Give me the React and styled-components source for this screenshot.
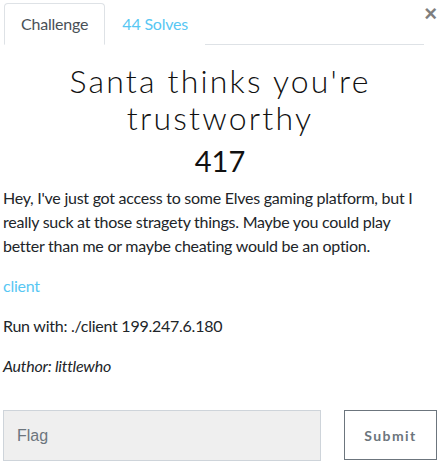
import styled, { createGlobalStyle } from 'styled-components';

const GlobalStyle = createGlobalStyle`
  body {
    margin: 0;
    background: #fff;
    font-family: Lato, "Open Sans", sans-serif;
    color: #212529;
  }
  * { box-sizing: border-box; }
`;

const Modal = styled.div`
  width: 440px;
  padding: 3px 3px 0 3px;
`;

const Header = styled.div`
  display: flex;
  align-items: flex-start;
`;

const Tabs = styled.ul`
  display: flex;
  flex: 1;
  list-style: none;
  margin: 0 0 0 1px;
  padding: 0;
  border-bottom: 1px solid #dee2e6;
  max-width: 420px;
`;

const Tab = styled.li`
  margin-bottom: -1px;
  padding: 8px 16px;
  font-size: 16px;
  line-height: 24px;
  letter-spacing: -0.2px;
  border: 1px solid ${p => (p.$active ? '#dee2e6' : 'transparent')};
  border-bottom-color: ${p => (p.$active ? '#fff' : 'transparent')};
  border-radius: 4px 4px 0 0;
  background: #fff;
  color: ${p => (p.$active ? '#495057' : '#58c7f3')};
`;

const Close = styled.button`
  margin: 0 0 0 auto;
  padding: 0;
  border: 0;
  background: none;
  font-family: "Liberation Sans", Arial, sans-serif;
  font-size: 22px;
  font-weight: 700;
  line-height: 1;
  color: #000;
  opacity: 0.5;
`;

const Title = styled.h3`
  margin: 17px 0 0;
  text-align: center;
  font-family: Lato, sans-serif;
  font-weight: 300;
  font-size: 32px;
  line-height: 37px;
  letter-spacing: 2.2px;
  color: #111;
`;

const Value = styled.h4`
  margin: 8px 0 8px;
  text-align: center;
  font-weight: 400;
  font-size: 29px;
  line-height: 34px;
  color: #111;
`;

const Para = styled.p`
  max-width: 422px;
  margin: 0 0 16px;
  font-size: 16px;
  line-height: 24px;
  letter-spacing: -0.25px;
  font-style: ${p => (p.$italic ? 'italic' : 'normal')};
`;

const Link = styled.a`
  color: #58c7f3;
  text-decoration: none;
`;

const Form = styled.form`
  display: flex;
  align-items: flex-start;
  margin-top: 32px;
`;

const FlagInput = styled.input`
  width: 318px;
  height: 51px;
  padding: 0 13px;
  border: 1px solid #ced4da;
  border-radius: 0;
  background: #efefef;
  font-family: "Liberation Sans", Arial, sans-serif;
  font-size: 16px;
  color: #495057;
  &::placeholder { color: #6c757d; }
`;

const Submit = styled.button`
  margin-left: 23px;
  width: 93px;
  height: 50px;
  padding: 0;
  border: 1px solid #6c757d;
  border-radius: 0;
  background: #fff;
  font-family: Lato, sans-serif;
  font-size: 14px;
  font-weight: 700;
  letter-spacing: 1.4px;
  color: #6c757d;
`;

export default function App() {
  return (
    <>
      <GlobalStyle />
      <Modal>
        <Header>
          <Tabs>
            <Tab $active>Challenge</Tab>
            <Tab>44 Solves</Tab>
          </Tabs>
          <Close aria-label="Close">×</Close>
        </Header>

        <Title>Santa thinks you're trustworthy</Title>
        <Value>417</Value>

        <Para>
          Hey, I've just got access to some Elves gaming platform, but I really suck at those
          stragety things. Maybe you could play better than me or maybe cheating would be an option.
        </Para>
        <Para><Link href="#">client</Link></Para>
        <Para>Run with: ./client 199.247.6.180</Para>
        <Para $italic>Author: littlewho</Para>

        <Form onSubmit={e => e.preventDefault()}>
          <FlagInput placeholder="Flag" />
          <Submit type="submit">Submit</Submit>
        </Form>
      </Modal>
    </>
  );
}
